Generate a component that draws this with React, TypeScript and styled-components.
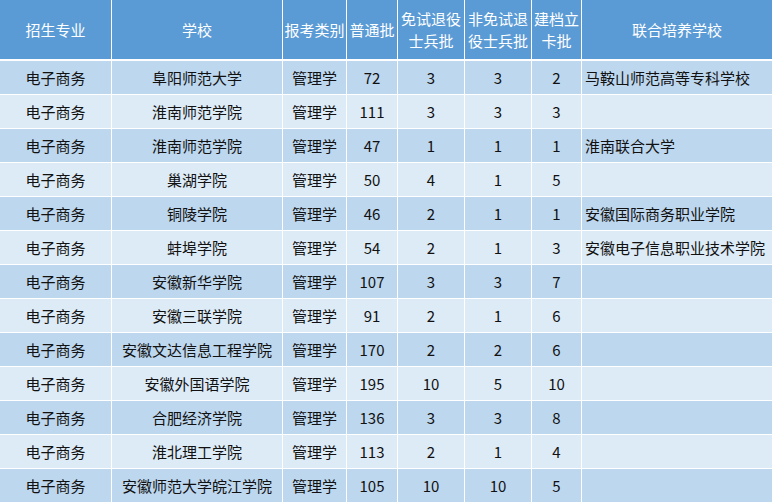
import React from 'react';
import styled, { createGlobalStyle } from 'styled-components';

const GlobalStyle = createGlobalStyle`
  html, body {
    margin: 0;
    padding: 0;
    background: #ffffff;
  }
  body {
    font-family: "Noto Sans CJK SC", "Noto Sans", sans-serif;
  }
`;

const COLUMNS = '111px 170px 63px 50px 66px 66px 49px 190px';

const Table = styled.div`
  display: flex;
  flex-direction: column;
  gap: 1px;
  width: 772px;
  background: #ffffff;
`;

const HeaderRow = styled.div`
  display: grid;
  grid-template-columns: ${COLUMNS};
  column-gap: 1px;
  height: 59px;
  margin-bottom: 1px;
`;

const HeaderCell = styled.div`
  display: flex;
  align-items: center;
  justify-content: center;
  background: #5b9bd5;
  color: #ffffff;
  font-size: 15px;
  line-height: 22px;
  text-align: center;
  padding-top: 1px;
`;

const Row = styled.div<{ $dark: boolean }>`
  display: grid;
  grid-template-columns: ${COLUMNS};
  column-gap: 1px;
  height: 33px;
  & > div {
    background: ${(p) => (p.$dark ? '#bdd7ee' : '#ddebf7')};
  }
`;

const Cell = styled.div<{ $left?: boolean }>`
  display: flex;
  align-items: center;
  justify-content: ${(p) => (p.$left ? 'flex-start' : 'center')};
  padding-left: ${(p) => (p.$left ? '3px' : '0')};
  color: #111111;
  font-size: 15px;
  white-space: nowrap;
  overflow: hidden;
`;

const headers = [
  '招生专业',
  '学校',
  '报考类别',
  '普通批',
  '免试退役士兵批',
  '非免试退役士兵批',
  '建档立卡批',
  '联合培养学校',
];

const rows: [string, string, string, number, number, number, number, string][] = [
  ['电子商务', '阜阳师范大学', '管理学', 72, 3, 3, 2, '马鞍山师范高等专科学校'],
  ['电子商务', '淮南师范学院', '管理学', 111, 3, 3, 3, ''],
  ['电子商务', '淮南师范学院', '管理学', 47, 1, 1, 1, '淮南联合大学'],
  ['电子商务', '巢湖学院', '管理学', 50, 4, 1, 5, ''],
  ['电子商务', '铜陵学院', '管理学', 46, 2, 1, 1, '安徽国际商务职业学院'],
  ['电子商务', '蚌埠学院', '管理学', 54, 2, 1, 3, '安徽电子信息职业技术学院'],
  ['电子商务', '安徽新华学院', '管理学', 107, 3, 3, 7, ''],
  ['电子商务', '安徽三联学院', '管理学', 91, 2, 1, 6, ''],
  ['电子商务', '安徽文达信息工程学院', '管理学', 170, 2, 2, 6, ''],
  ['电子商务', '安徽外国语学院', '管理学', 195, 10, 5, 10, ''],
  ['电子商务', '合肥经济学院', '管理学', 136, 3, 3, 8, ''],
  ['电子商务', '淮北理工学院', '管理学', 113, 2, 1, 4, ''],
  ['电子商务', '安徽师范大学皖江学院', '管理学', 105, 10, 10, 5, ''],
];

const App: React.FC = () => {
  return (
    <>
      <GlobalStyle />
      <Table>
        <HeaderRow>
          {headers.map((h) => (
            <HeaderCell key={h}>{h}</HeaderCell>
          ))}
        </HeaderRow>
        {rows.map((r, index) => (
          <Row key={index} $dark={index % 2 === 0}>
            {r.slice(0, 7).map((v, i) => (
              <Cell key={i}>{v}</Cell>
            ))}
            <Cell $left>{r[7]}</Cell>
          </Row>
        ))}
      </Table>
    </>
  );
};

export default App;
